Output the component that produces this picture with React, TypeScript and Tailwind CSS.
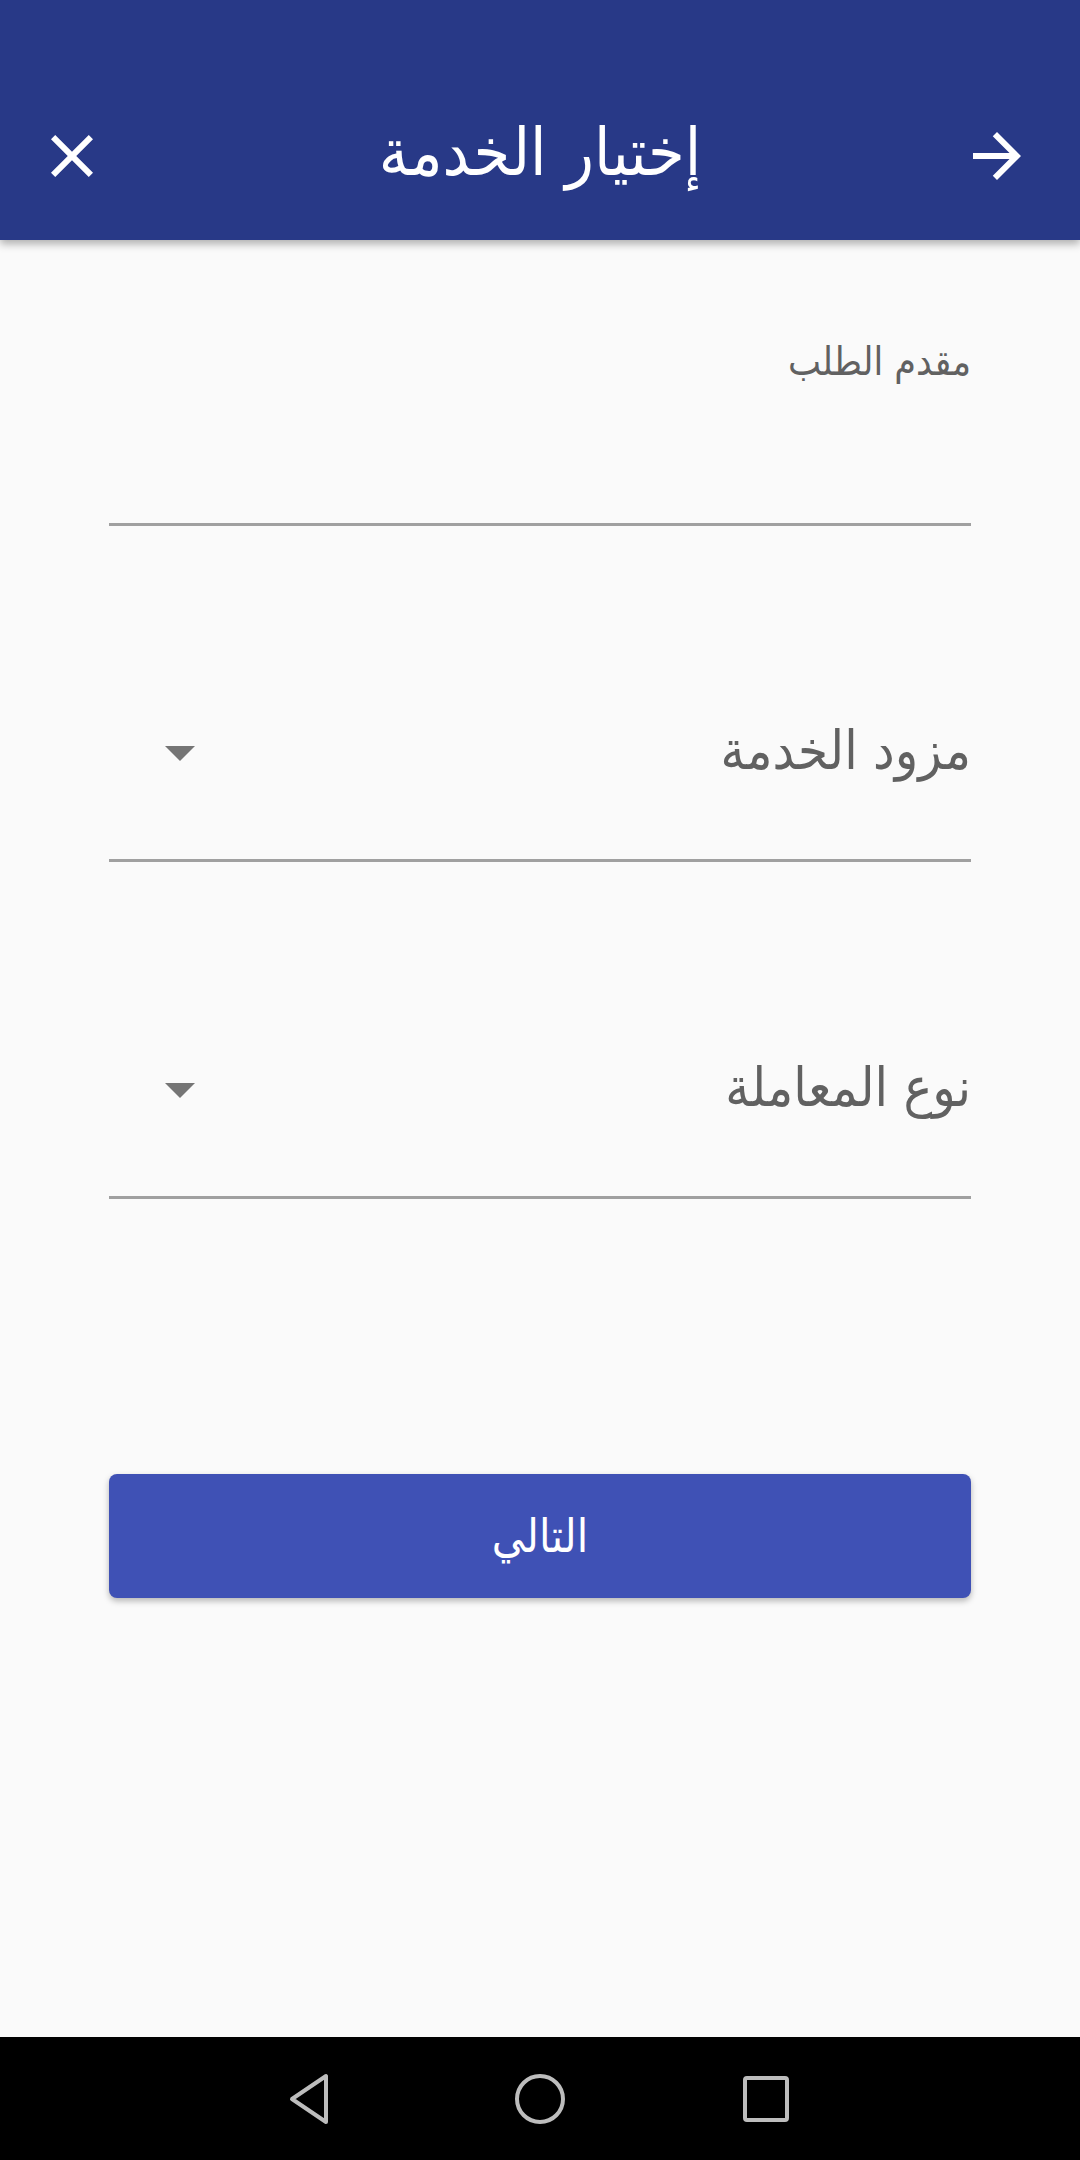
import React from "react";

const fontStack = { fontFamily: '"DejaVu Sans Condensed", "DejaVu Sans", "Noto Sans", sans-serif' };

const CloseIcon = () => (
    <svg viewBox="0 0 24 24" className="w-[72px] h-[72px]" fill="white">
        <path d="M19 6.41L17.59 5 12 10.59 6.41 5 5 6.41 10.59 12 5 17.59 6.41 19 12 13.41 17.59 19 19 17.59 13.41 12z" />
    </svg>
);

const ArrowIcon = () => (
    <svg viewBox="0 0 24 24" className="w-[72px] h-[72px]" fill="white">
        <path d="M12 4l-1.41 1.41L16.17 11H4v2h12.17l-5.58 5.59L12 20l8-8z" />
    </svg>
);

const Caret = () => (
    <svg viewBox="0 0 30 15" className="w-[30px] h-[15px]" fill="#757575">
        <path d="M0 0h30L15 15z" />
    </svg>
);

interface DropdownProps {
    label: string;
    className?: string;
}

const Dropdown: React.FC<DropdownProps> = ({ label, className }) => (
    <div className={className}>
        <div className="h-[110px] flex items-center justify-between">
            <span className="text-[54px] leading-none text-[#616161]">{label}</span>
            <span className="pl-[56px] pt-[4px]">
                <Caret />
            </span>
        </div>
        <div className="h-[53px]" />
        <div className="h-[3px] bg-[#a0a0a0]" />
    </div>
);

export default function App() {
    return (
        <div dir="rtl" style={fontStack} className="h-[2160px] flex flex-col bg-[#fafafa]">
            <header className="h-[240px] bg-[#283987] shadow-[0_4px_8px_rgba(0,0,0,0.3)] relative z-10 flex flex-col">
                <div className="h-[72px]" />
                <div className="flex-1 grid grid-cols-[1fr_auto_1fr] items-center px-[36px]">
                    <div className="flex justify-start pr-[11px]">
                        <button className="flex items-center">
                            <ArrowIcon />
                        </button>
                    </div>
                    <h1 className="text-[66px] text-white leading-none pb-[6px]">إختيار الخدمة</h1>
                    <div className="flex justify-end">
                        <button className="flex items-center">
                            <CloseIcon />
                        </button>
                    </div>
                </div>
            </header>

            <main className="flex-1 px-[109px] pt-[100px]">
                <div>
                    <div className="h-[44px] leading-[44px] text-[39px] text-[#616161]">مقدم الطلب</div>
                    <div className="h-[139px]" />
                    <div className="h-[3px] bg-[#a0a0a0]" />
                </div>

                <Dropdown label="مزود الخدمة" className="mt-[170px]" />
                <Dropdown label="نوع المعاملة" className="mt-[171px]" />

                <button className="mt-[275px] w-full h-[124px] rounded-[8px] bg-[#3f51b5] text-white text-[46px] shadow-[0_3px_6px_rgba(0,0,0,0.28)]">
                    التالي
                </button>
            </main>

            <nav dir="ltr" className="h-[123px] bg-black flex items-center justify-center">
                <div className="flex items-center">
                    <div className="w-[226px] flex justify-center pr-[8px]">
                        <svg viewBox="0 0 44 52" className="w-[44px] h-[52px]" fill="none" stroke="#bdbdbd" strokeWidth="4" strokeLinejoin="round">
                            <path d="M38 3v46L4 26z" />
                        </svg>
                    </div>
                    <div className="w-[226px] flex justify-center">
                        <svg viewBox="0 0 52 52" className="w-[52px] h-[52px]" fill="none" stroke="#bdbdbd" strokeWidth="4">
                            <circle cx="26" cy="26" r="23" />
                        </svg>
                    </div>
                    <div className="w-[226px] flex justify-center">
                        <svg viewBox="0 0 48 48" className="w-[48px] h-[48px]" fill="none" stroke="#bdbdbd" strokeWidth="4">
                            <rect x="3" y="3" width="42" height="42" rx="2" />
                        </svg>
                    </div>
                </div>
            </nav>
        </div>
    );
}
